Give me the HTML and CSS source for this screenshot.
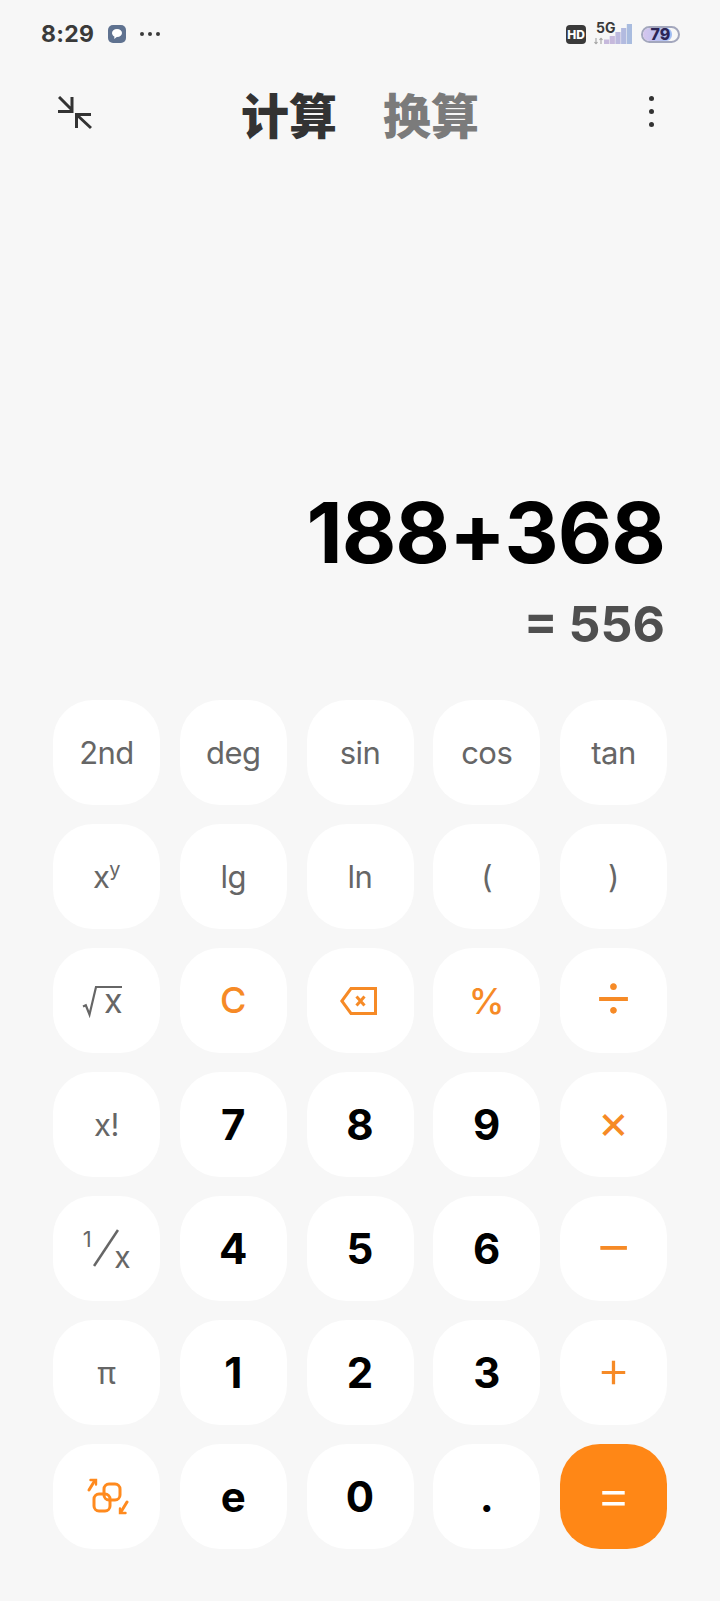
FILE: index.html
```html
<!DOCTYPE html>
<html lang="zh">
<head>
  <meta charset="UTF-8">
  <meta name="viewport" content="width=device-width, initial-scale=1.0">
  <title>计算器</title>
  <link rel="stylesheet" href="styles.css">
</head>
<body>
  <div class="app">

    <div class="status-bar">
      <div class="status-left">
        <span class="time">8:29</span>
        <span class="chat-badge">
          <svg width="12" height="12" viewBox="0 0 12 12"><path d="M6 1C3 1 1 2.800 1 5c0 1.600 1 2.800 2.400 3.500L3.200 11l2.600-2H6c3 0 5-1.800 5-4S9 1 6 1z" fill="#fff"/></svg>
        </span>
        <span class="more-dots"><i></i><i></i><i></i></span>
      </div>
      <div class="status-right">
        <span class="hd-badge">HD</span>
        <span class="signal">
          <span class="signal-5g">5G</span>
          <svg class="signal-bars" width="38" height="22" viewBox="0 0 38 22">
            <path d="M2 15v6M2 21l-1.500-2M2 21l1.500-2" stroke="#aaa" stroke-width="1.200" fill="none"/>
            <path d="M7 21v-6M7 15l-1.500 2M7 15l1.500 2" stroke="#aaa" stroke-width="1.200" fill="none"/>
            <rect x="10" y="16.500" width="5.200" height="4.500" fill="#c6b9dc"/>
            <rect x="15.700" y="13" width="5.200" height="8" fill="#c6b9dc"/>
            <rect x="21.400" y="9" width="5.200" height="12" fill="#bcb9de"/>
            <rect x="27.100" y="5" width="5.200" height="16" fill="#b2badf"/>
            <rect x="32.800" y="1" width="5.200" height="20" fill="#a9bcdf"/>
          </svg>
        </span>
        <span class="battery"><span class="battery-fill"></span><span class="battery-num">79</span></span>
      </div>
    </div>

    <div class="top-bar">
      <svg class="shrink-icon" width="34" height="34" viewBox="0 0 34 34" fill="none" stroke="#333" stroke-width="3">
        <path d="M1 1l13 13M14 1v14.500H0"/>
        <path d="M33 32L19 19M33 18.500H18.500V32"/>
      </svg>
      <div class="tabs">
        <span class="tab active">计算</span>
        <span class="tab">换算</span>
      </div>
      <div class="kebab"><i></i><i></i><i></i></div>
    </div>

    <div class="display">
      <div class="expression">188+368</div>
      <div class="result">= 556</div>
    </div>

    <div class="keypad">
      <div class="key fn">2nd</div>
      <div class="key fn">deg</div>
      <div class="key fn">sin</div>
      <div class="key fn">cos</div>
      <div class="key fn">tan</div>

      <div class="key fn">x<sup class="power">y</sup></div>
      <div class="key fn">lg</div>
      <div class="key fn">ln</div>
      <div class="key fn">(</div>
      <div class="key fn">)</div>

      <div class="key fn">
        <svg class="root-sign" width="21" height="30" viewBox="0 0 21 30" fill="none" stroke="#666" stroke-width="2.200"><path d="M0 20.500l2.800-1.200L6.500 28.500 13 1h26"/></svg><span class="root-x">x</span>
      </div>
      <div class="key op sign-c">C</div>
      <div class="key op">
        <svg class="back-icon" width="37" height="28" viewBox="0 0 37 28" fill="none" stroke="#f68a26" stroke-width="3"><path d="M11 1.500h24.500v25H11L1.800 14z"/><path d="M16.500 9.500l8 9M24.500 9.500l-8 9"/></svg>
      </div>
      <div class="key op sign-pct">%</div>
      <div class="key op sign-div">÷</div>

      <div class="key fn">x!</div>
      <div class="key num">7</div>
      <div class="key num">8</div>
      <div class="key num">9</div>
      <div class="key op sign-mul">×</div>

      <div class="key fn">
        <span class="frac-one">1</span>
        <svg class="frac-slash" width="26" height="38" viewBox="0 0 26 38" stroke="#666" stroke-width="2.600"><path d="M1 37L25 1"/></svg>
        <span class="frac-x">x</span>
      </div>
      <div class="key num">4</div>
      <div class="key num">5</div>
      <div class="key num">6</div>
      <div class="key op sign-min">−</div>

      <div class="key fn">π</div>
      <div class="key num">1</div>
      <div class="key num">2</div>
      <div class="key num">3</div>
      <div class="key op sign-add">+</div>

      <div class="key op">
        <svg width="44" height="40" viewBox="0 0 44 40" fill="none" stroke="#ff8a1e" stroke-width="3" stroke-linecap="round">
          <rect x="9" y="17" width="16" height="17" rx="5"/>
          <rect x="19" y="7" width="16" height="16" rx="5"/>
          <path d="M4 13L9.500 4"/>
          <path d="M5.500 3h5.500v4.500" stroke-width="2.400"/>
          <path d="M42 25l-5.500 9"/>
          <path d="M40.500 36h-5.500v-4.500" stroke-width="2.400"/>
        </svg>
      </div>
      <div class="key num">e</div>
      <div class="key num">0</div>
      <div class="key num">.</div>
      <div class="key equals">=</div>
    </div>

  </div>
</body>
</html>
```

FILE: styles.css
```css
* {
  box-sizing: border-box;
}

body {
  margin: 0;
  background-color: #f7f7f7;
  font-family: Inter, "Noto Sans CJK SC", sans-serif;
}

.app {
  width: 720px;
  height: 1601px;
  display: flex;
  flex-direction: column;
}

/* status bar */
.status-bar {
  height: 68px;
  padding: 24px 40px 0 41px;
  display: flex;
  justify-content: space-between;
  align-items: flex-start;
}

.status-left,
.status-right {
  display: flex;
  align-items: center;
  height: 20px;
}

.time {
  font-size: 23px;
  font-weight: 700;
  letter-spacing: 0.300px;
  color: #3a3a3a;
}

.chat-badge {
  width: 18px;
  height: 18px;
  margin-left: 14px;
  border-radius: 5px;
  background: #5f7290;
  display: flex;
  justify-content: center;
  align-items: center;
}

.more-dots {
  display: flex;
  gap: 4px;
  margin-left: 14px;
}

.more-dots i {
  width: 4px;
  height: 4px;
  border-radius: 50%;
  background: #3a3a3a;
}

.hd-badge {
  width: 20px;
  height: 19px;
  border-radius: 4px;
  background: #3a3a3a;
  color: #fff;
  font-size: 12px;
  font-weight: 800;
  text-align: center;
  line-height: 19px;
}

.signal {
  position: relative;
  width: 38px;
  height: 22px;
  margin-left: 8px;
}

.signal-bars {
  display: block;
}

.signal-5g {
  position: absolute;
  left: 2px;
  top: -4px;
  font-size: 14px;
  font-weight: 700;
  color: #3a3a3a;
}

.battery {
  position: relative;
  width: 39px;
  height: 17px;
  margin-left: 9px;
  border: 2px solid #a3a7bd;
  border-radius: 9px;
  display: flex;
  justify-content: center;
  align-items: center;
  overflow: hidden;
}

.battery-fill {
  position: absolute;
  left: 0;
  top: 0;
  bottom: 0;
  width: 82%;
  border-radius: 0 6px 6px 0;
  background: linear-gradient(to right, #d6c6ee, #a4bef2);
}

.battery-num {
  position: relative;
  font-size: 16px;
  font-weight: 800;
  color: #2c2556;
}

/* tabs row */
.top-bar {
  position: relative;
  height: 92px;
  padding: 28px 0 0 58px;
  display: flex;
  align-items: flex-start;
}

.shrink-icon {
  flex: none;
}

.tabs {
  display: flex;
  gap: 46px;
  margin-left: 149px;
  margin-top: -13px;
}

.tab {
  font-family: "Noto Sans CJK SC", sans-serif;
  font-size: 48px;
  font-weight: 900;
  line-height: 60px;
  color: #7b7b7b;
}

.tab.active {
  color: #333;
}

.kebab {
  position: absolute;
  right: 66px;
  top: 28px;
  display: flex;
  flex-direction: column;
  gap: 8px;
}

.kebab i {
  width: 5px;
  height: 5px;
  border-radius: 50%;
  background: #333;
}

/* expression + result */
.display {
  flex: 1;
  padding: 0 55px 45px 0;
  display: flex;
  flex-direction: column;
  justify-content: flex-end;
  align-items: flex-end;
}

.expression {
  font-size: 84px;
  font-weight: 700;
  letter-spacing: -1px;
  line-height: 100px;
  color: #000;
}

.result {
  font-size: 50px;
  font-weight: 700;
  word-spacing: -1px;
  line-height: 62px;
  margin-top: 10px;
  color: #4f4f4f;
}

/* keys */
.keypad {
  padding: 0 53px 52px;
  display: grid;
  grid-template-columns: repeat(5, 107px);
  grid-auto-rows: 105px;
  column-gap: 19.750px;
  row-gap: 19px;
}

.key {
  background: #fff;
  border-radius: 40px;
  display: flex;
  justify-content: center;
  align-items: center;
}

.fn {
  font-size: 31px;
  letter-spacing: -0.500px;
  color: #666;
}

.num {
  font-size: 42px;
  font-weight: 700;
  color: #000;
}

.op {
  font-size: 40px;
  color: #f68a26;
}

.sign-c {
  font-size: 36px;
  font-weight: 500;
  padding-bottom: 2px;
}

.sign-pct {
  font-size: 36px;
  font-weight: 500;
}

.sign-div {
  font-size: 65px;
  font-weight: 300;
  padding-bottom: 14px;
}

.sign-mul {
  font-size: 48px;
  font-weight: 400;
  padding-bottom: 6px;
}

.sign-min {
  font-size: 60px;
  font-weight: 300;
  padding-bottom: 12px;
}

.sign-add {
  font-size: 52px;
  font-weight: 300;
  padding-bottom: 8px;
}

.equals {
  background: #ff8716;
  font-size: 55px;
  font-weight: 300;
  color: #fff;
  padding-bottom: 6px;
}

.back-icon {
  margin-right: 4px;
}

.power {
  font-size: 20px;
  line-height: 1;
  margin-top: -16px;
  vertical-align: baseline;
}

.root-sign {
  overflow: visible;
  flex: none;
}

.root-x {
  font-size: 34px;
  margin-right: 8px;
}

.frac-one {
  font-size: 22px;
  align-self: flex-start;
  margin-top: 30px;
}

.frac-slash {
  margin: -2px -5px 0 2px;
}

.frac-x {
  font-size: 30px;
  align-self: flex-end;
  margin-bottom: 26px;
}
```
